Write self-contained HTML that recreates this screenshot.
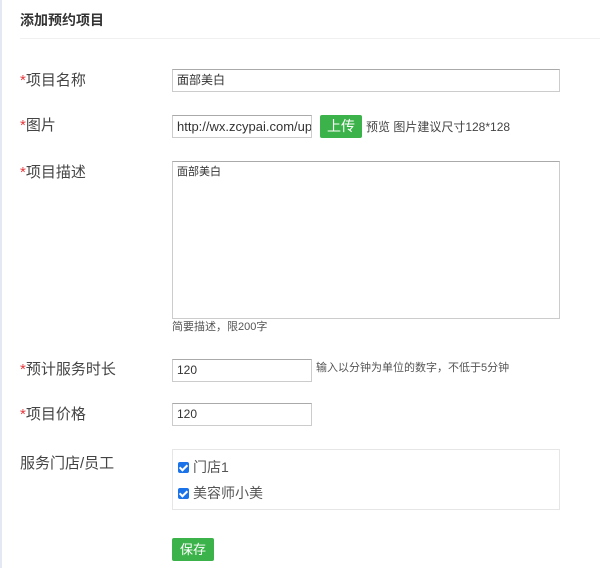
<!DOCTYPE html>
<html><head><meta charset="utf-8"><style>
*{margin:0;padding:0;box-sizing:border-box}
body{width:600px;height:568px;background:#fff;position:relative;overflow:hidden;font-family:"Liberation Sans","Noto Sans CJK SC",sans-serif;color:#333}
.a{position:absolute;white-space:nowrap}
.lb{font-size:15px;color:#444;line-height:20px}
.lb i{font-style:normal;color:#e4393c}
.in{position:absolute;border:1px solid #ccc;border-top-color:#aaa;background:#fff;font-size:12px;padding:0 0 0 4px;line-height:21px;color:#333;overflow:hidden;white-space:nowrap}
.hint{font-size:11px;color:#555}
.btn{position:absolute;background:#3cb34a;color:#fff;border-radius:2px;text-align:center}
.cb{position:absolute;width:11px;height:11px;background:#1a73e8;border-radius:2px}
.cb:after{content:"";position:absolute;left:3px;top:1px;width:3px;height:6px;border:solid #fff;border-width:0 2px 2px 0;transform:rotate(45deg)}
</style></head><body>
<div class="a" style="left:0;top:0;width:2px;height:568px;background:#e3e8f2"></div>
<div class="a" style="left:20px;top:10px;font-size:14px;font-weight:bold;color:#333;line-height:20px">添加预约项目</div>
<div class="a" style="left:20px;top:38px;width:580px;height:1px;background:#f0f0f0"></div>

<div class="a lb" style="left:20px;top:71px"><i>*</i>项目名称</div>
<div class="in" style="left:172px;top:69px;width:388px;height:23px">面部美白</div>

<div class="a lb" style="left:20px;top:116px"><i>*</i>图片</div>
<div class="in" style="left:172px;top:115px;width:140px;height:23px;font-size:13px">http://wx.zcypai.com/up</div>
<div class="btn" style="left:320px;top:115px;width:42px;height:23px;font-size:14px;line-height:23px">上传</div>
<div class="a" style="left:366px;top:119px;font-size:12px;color:#444;line-height:16px">预览 图片建议尺寸128*128</div>

<div class="a lb" style="left:20px;top:163px"><i>*</i>项目描述</div>
<div class="in" style="left:172px;top:161px;width:388px;height:158px;line-height:20px;font-size:11px">面部美白</div>
<div class="a hint" style="left:172px;top:320px;line-height:14px">简要描述，限200字</div>

<div class="a lb" style="left:20px;top:360px"><i>*</i>预计服务时长</div>
<div class="in" style="left:172px;top:359px;width:140px;height:23px">120</div>
<div class="a hint" style="left:316px;top:361px;line-height:14px">输入以分钟为单位的数字，不低于5分钟</div>

<div class="a lb" style="left:20px;top:405px"><i>*</i>项目价格</div>
<div class="in" style="left:172px;top:403px;width:140px;height:23px">120</div>

<div class="a lb" style="left:20px;top:454px">服务门店/员工</div>
<div class="a" style="left:172px;top:449px;width:388px;height:61px;border:1px solid #e6e6e6"></div>
<div class="cb" style="left:178px;top:462px"></div>
<div class="a" style="left:193px;top:458px;font-size:14px;color:#555;line-height:18px">门店1</div>
<div class="cb" style="left:178px;top:488px"></div>
<div class="a" style="left:193px;top:484px;font-size:14px;color:#555;line-height:18px">美容师小美</div>

<div class="btn" style="left:172px;top:538px;width:42px;height:23px;font-size:13px;line-height:23px">保存</div>
</body></html>
